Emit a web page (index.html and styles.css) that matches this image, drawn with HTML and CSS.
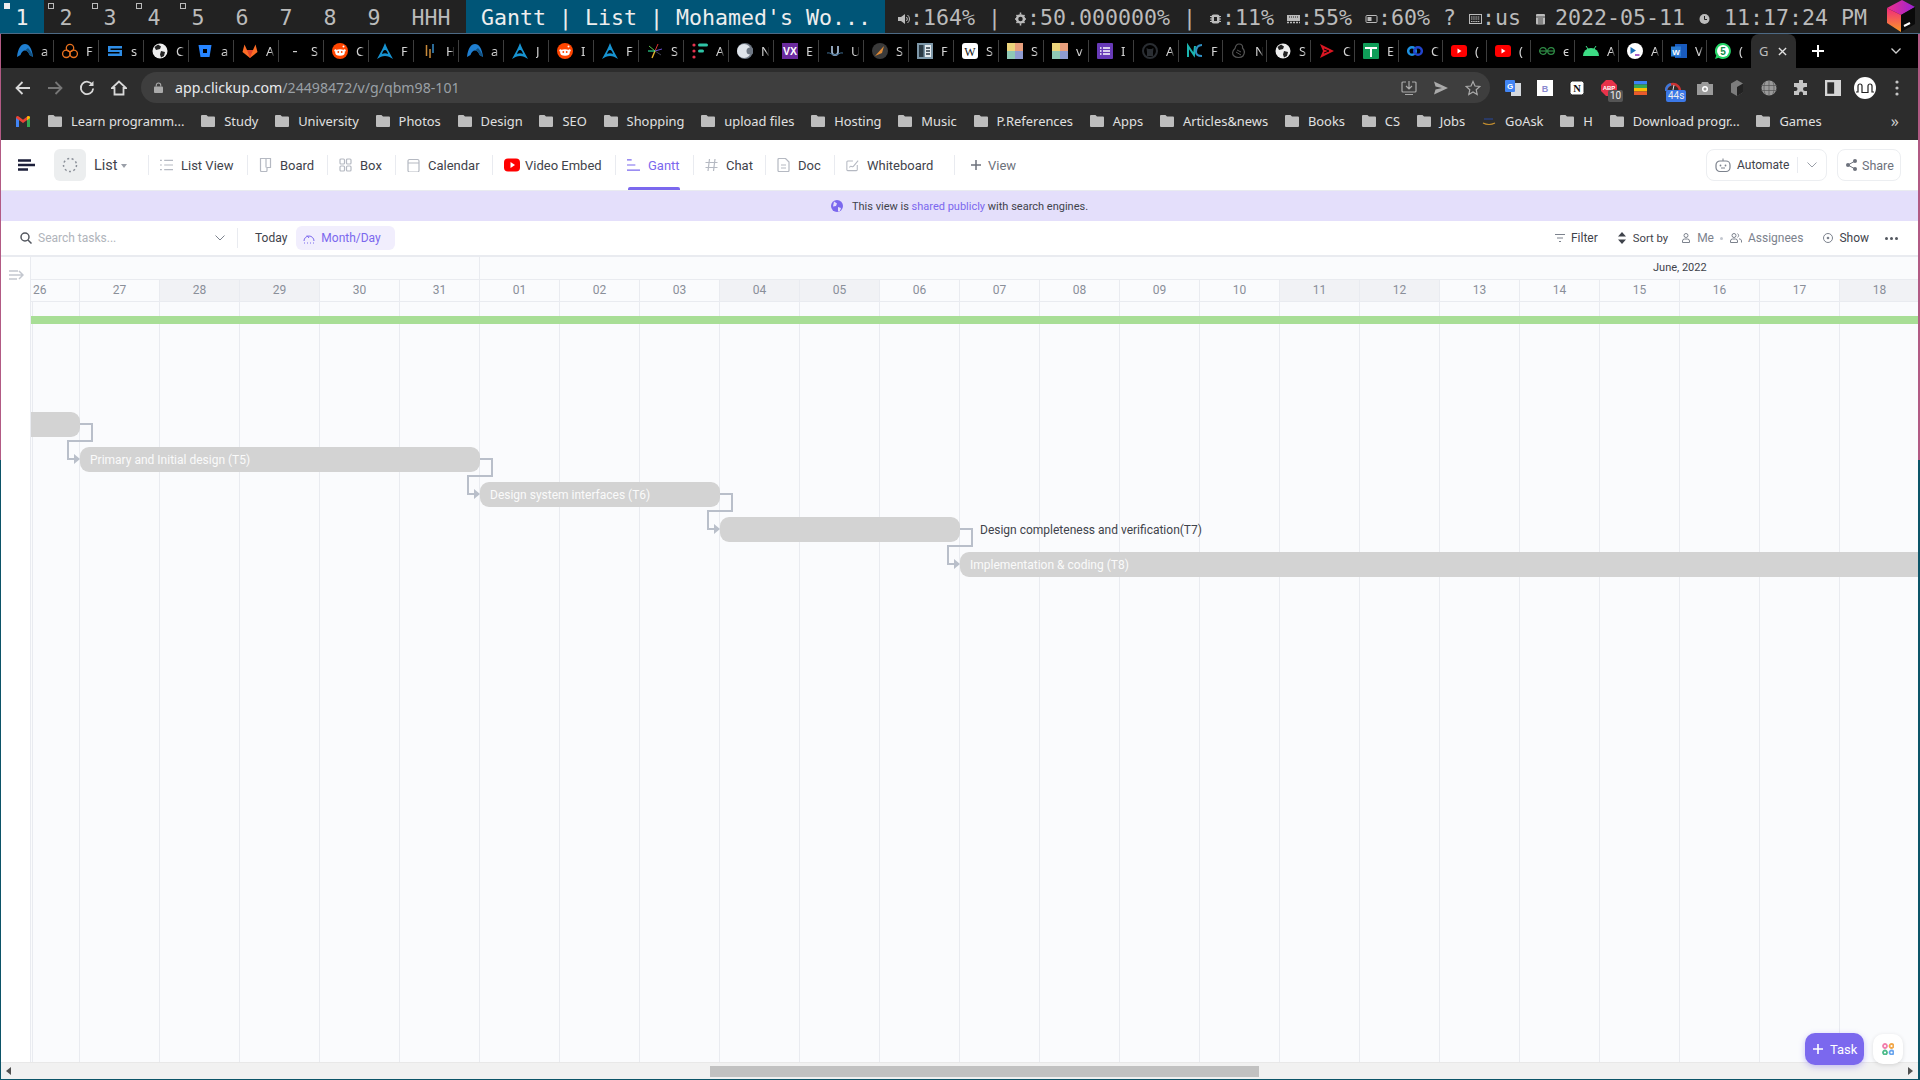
FILE: index.html
```html
<!DOCTYPE html>
<html lang="en">
<head>
    <meta charset="UTF-8">
    <meta name="viewport" content="width=device-width, initial-scale=1.0">
    <title>Gantt | List | Mohamed's Workspace</title>
    <link rel="stylesheet" href="styles.css">
</head>
<body>
    <!-- Icon sprite -->
    <svg class="sprite" xmlns="http://www.w3.org/2000/svg">
        <symbol id="g-vol" viewBox="0 0 13 16"><path d="M1 6h3l4-3v10l-4-3H1z" fill="currentColor"/><path d="M9.500 6a3 3 0 0 1 0 4M10.500 4a5 5 0 0 1 0 8" stroke="currentColor" fill="none"/></symbol>
        <symbol id="g-gear" viewBox="0 0 13 16"><circle cx="6.500" cy="8" r="3.500" fill="none" stroke="currentColor" stroke-width="2.500"/><path d="M6.500 1.500v2M6.500 12.500v2M1 8h2M10 8h2M2.500 4l1.500 1.500M9 10.500l1.500 1.500M2.500 12L4 10.500M9 5.500L10.500 4" stroke="currentColor" stroke-width="1.500"/></symbol>
        <symbol id="g-cpu" viewBox="0 0 13 16"><rect x="2.500" y="3.500" width="8" height="9" rx="2" fill="currentColor"/><path d="M1 5.500h11M1 8h11M1 10.500h11" stroke="currentColor"/><rect x="5" y="6" width="3" height="4" fill="#222"/></symbol>
        <symbol id="g-ram" viewBox="0 0 13 16"><rect x="0" y="4" width="13" height="6" fill="currentColor"/><path d="M0 11.500h13" stroke="currentColor" stroke-width="1.500" stroke-dasharray="2 1"/><path d="M2 6h9" stroke="#222" stroke-dasharray="1 1"/></symbol>
        <symbol id="g-batt" viewBox="0 0 13 16"><rect x="1" y="4.500" width="11" height="7" rx="1" fill="none" stroke="currentColor"/><rect x="2.500" y="6" width="4" height="4" fill="currentColor"/></symbol>
        <symbol id="g-kbd" viewBox="0 0 13 16"><rect x="0.500" y="3.500" width="12" height="9" fill="none" stroke="currentColor"/><path d="M2 6h9M2 8h9M2 10.500h9" stroke="currentColor" stroke-width="1.200" stroke-dasharray="1.500 .7"/></symbol>
        <symbol id="g-cal" viewBox="0 0 13 16"><rect x="2" y="3" width="9" height="10.500" rx="1" fill="currentColor"/><path d="M2 6h9M4 8h5M4 10h5M4 12h5" stroke="#222" stroke-width=".7"/></symbol>
        <symbol id="g-clock" viewBox="0 0 13 16"><circle cx="6.500" cy="8" r="5" fill="currentColor"/><path d="M6.500 5v3.500h2.500" stroke="#222" fill="none"/></symbol>

        <symbol id="f-arc" viewBox="0 0 16 16"><path d="M0 14C1 5 4 1 8 1s7 4 8 13l-3.500-2C11.500 9 10 7.500 8 7.500S4.500 9 3.500 12z" fill="#1f7fd1"/><path d="M8 7.500c2 0 3.500 1.500 4.500 4.500l3.500 2C15 10 13 7 11 5z" fill="#12507f"/></symbol>
        <symbol id="f-cloud" viewBox="0 0 16 16"><g fill="none" stroke="#e8711f" stroke-width="1.300"><circle cx="8" cy="5" r="3.700"/><circle cx="4.300" cy="10.800" r="3.700"/><circle cx="11.700" cy="10.800" r="3.700"/></g></symbol>
        <symbol id="f-sblue" viewBox="0 0 16 16"><path d="M1 3h14v2.500H3.500V7H15v6H1v-2.500h11.500V9H1z" fill="#2e8de6"/></symbol>
        <symbol id="f-globe" viewBox="0 0 16 16"><circle cx="8" cy="8" r="7.500" fill="#eee"/><path d="M6 1.500l3 2-1 2.500-4 1-1.500-3zM9 8l4 1-1 4-3 1.500-1-3z" fill="#222"/></symbol>
        <symbol id="f-bit" viewBox="0 0 16 16"><path d="M1.500 2h13l-2 12h-9z" fill="#2684ff"/><rect x="6" y="6" width="4" height="4" fill="#000"/></symbol>
        <symbol id="f-gitlab" viewBox="0 0 16 16"><path d="M8 15L.500 9 2.500 1.500 5 7h6l2.500-5.500L15.500 9z" fill="#fc6d26"/><path d="M8 15L5 7h6z" fill="#e24329"/></symbol>
        <symbol id="f-dash" viewBox="0 0 16 16"><rect x="6" y="8" width="4" height="1.200" fill="#ccc"/></symbol>
        <symbol id="f-reddit" viewBox="0 0 16 16"><circle cx="8" cy="8" r="8" fill="#ff4500"/><ellipse cx="8" cy="9.500" rx="4.800" ry="3.200" fill="#fff"/><circle cx="3.500" cy="7.500" r="1.200" fill="#fff"/><circle cx="12.500" cy="7.500" r="1.200" fill="#fff"/><circle cx="11.500" cy="3.500" r="1" fill="#fff"/><circle cx="6.300" cy="9" r=".9" fill="#ff4500"/><circle cx="9.700" cy="9" r=".9" fill="#ff4500"/></symbol>
        <symbol id="f-arch" viewBox="0 0 16 16"><path d="M8 0C6.500 4 4 9 0 16c3-2 5-3 8-3s5 1 8 3C12 9 9.500 4 8 0z" fill="#1793d1"/><path d="M8 7c-1.500 0-2.500 2-3 4 2-1 4-1 6 0-.5-2-1.500-4-3-4z" fill="#000"/></symbol>
        <symbol id="f-hh" viewBox="0 0 16 16"><path d="M4.500 2v11M8 6v9" stroke="#c98a3a" stroke-width="1.500"/><path d="M11 1v9" stroke="#3a8ec9" stroke-width="1.500"/></symbol>
        <symbol id="f-spark" viewBox="0 0 16 16"><path d="M8 8L2 3" stroke="#58c34c"/><path d="M8 8l3-7" stroke="#d33"/><path d="M8 8l7-2" stroke="#6a4fd0"/><path d="M8 8l6 4" stroke="#445"/><path d="M8 8l-3 7" stroke="#e2b12f" stroke-width="1.400"/><path d="M8 8H1" stroke="#3fa"/></symbol>
        <symbol id="f-flags" viewBox="0 0 16 16"><circle cx="2" cy="2" r="1.600" fill="#e5344f"/><circle cx="2" cy="8" r="1.600" fill="#e5344f"/><circle cx="2" cy="14" r="1.600" fill="#e5344f"/><rect x="6" y="0.500" width="10" height="3" rx="1.500" fill="#2ec4a6"/><rect x="6" y="6.500" width="6" height="3" rx="1.500" fill="#2ec4a6"/></symbol>
        <symbol id="f-moon" viewBox="0 0 16 16"><circle cx="8" cy="8" r="8" fill="#6f7884"/><circle cx="7" cy="8" r="7" fill="#dfe4ea"/><circle cx="13" cy="8" r="3.500" fill="#6f7884"/></symbol>
        <symbol id="f-vx" viewBox="0 0 16 16"><rect width="16" height="16" fill="#6b2b9e"/><text x="8" y="12" font-size="10.500" font-weight="700" font-family="Liberation Sans" text-anchor="middle" fill="#fff">VX</text></symbol>
        <symbol id="f-u" viewBox="0 0 16 16"><path d="M5 3v6a3 3 0 0 0 6 0V3" fill="none" stroke="#9fb4cc" stroke-width="1.800"/><path d="M0 10c3-1 5 2 8 2s5-3 8-2" fill="none" stroke="#3f6d92"/></symbol>
        <symbol id="f-meteor" viewBox="0 0 16 16"><circle cx="8" cy="8" r="8" fill="#3a3a3a"/><path d="M3 13L12 3l-2 7z" fill="#e08a35"/></symbol>
        <symbol id="f-panel" viewBox="0 0 16 16"><rect width="16" height="16" fill="#7d97a8"/><rect x="2" y="2" width="4.500" height="12" fill="#2b3a44"/><rect x="8" y="2" width="6" height="12" fill="#e8eef2"/><path d="M9 5h4M9 8h4M9 11h4" stroke="#2b3a44" stroke-width="1.500"/></symbol>
        <symbol id="f-wiki" viewBox="0 0 16 16"><rect width="16" height="16" rx="3" fill="#fff"/><text x="8" y="12.500" font-size="12" font-family="Liberation Serif" text-anchor="middle" fill="#111">W</text></symbol>
        <symbol id="f-quad" viewBox="0 0 16 16"><clipPath id="qc"><rect width="16" height="16" rx="3"/></clipPath><g clip-path="url(#qc)"><rect width="8" height="8" fill="#ecd47c"/><rect x="8" width="8" height="8" fill="#e89f7d"/><rect y="8" width="8" height="8" fill="#8fc9b5"/><rect x="8" y="8" width="8" height="8" fill="#8f9bd1"/></g></symbol>
        <symbol id="f-form" viewBox="0 0 16 16"><rect width="16" height="16" rx="1" fill="#673ab7"/><path d="M6 5h7M6 8h7M6 11h7M3 5h1.500M3 8h1.500M3 11h1.500" stroke="#fff" stroke-width="1.500"/></symbol>
        <symbol id="f-github" viewBox="0 0 16 16"><circle cx="8" cy="8" r="7" fill="none" stroke="#2a2e33" stroke-width="2"/><path d="M5 13V9L4.500 5l2 1h3l2-1L11 9v4z" fill="#2a2e33"/></symbol>
        <symbol id="f-teal" viewBox="0 0 16 16"><path d="M1 14V3l6 9 1-9" fill="none" stroke="#1bb5b0" stroke-width="2"/><path d="M15 2C10 2 9 6 9 9s2 4 6 4" fill="none" stroke="#2f8fc4" stroke-width="2"/></symbol>
        <symbol id="f-bird" viewBox="0 0 16 16"><path d="M8 1c3 0 4 2 3.500 4 2 2 2.500 5 .5 8-2 2-7 2-9 0S1 8 4 5.500C4.500 3 6 1 8 1z" fill="none" stroke="#555" stroke-width="1.200"/><path d="M5 9l5 3M6 7l4 2" stroke="#555"/></symbol>
        <symbol id="f-play" viewBox="0 0 16 16"><path d="M1 1l14 7-14 7 3-7z" fill="#d91622"/><path d="M5 6l5 2-5 2" fill="none" stroke="#000"/></symbol>
        <symbol id="f-plus" viewBox="0 0 16 16"><rect width="16" height="16" rx="1" fill="#0f9d58"/><path d="M2 5h12M8 5v9" stroke="#fff" stroke-width="2"/></symbol>
        <symbol id="f-webex" viewBox="0 0 16 16"><circle cx="5" cy="8" r="3.800" fill="none" stroke="#1e90e0" stroke-width="2.500"/><circle cx="11" cy="8" r="3.800" fill="none" stroke="#2244cc" stroke-width="2.500"/></symbol>
        <symbol id="f-yt" viewBox="0 0 16 16"><rect y="2" width="16" height="12" rx="3" fill="#f00"/><path d="M6.500 5.500l4 2.500-4 2.500z" fill="#fff"/></symbol>
        <symbol id="f-gfg" viewBox="0 0 16 16"><g fill="none" stroke="#2f8d46" stroke-width="1.200"><circle cx="4" cy="8" r="3.300"/><circle cx="12" cy="8" r="3.300"/><path d="M0 8h16"/></g></symbol>
        <symbol id="f-android" viewBox="0 0 16 16"><path d="M0 13a8 8 0 0 1 16 0z" fill="#3ddc84"/><path d="M3 3l2 3M13 3l-2 3" stroke="#3ddc84"/></symbol>
        <symbol id="f-ps" viewBox="0 0 16 16"><circle cx="8" cy="8" r="8" fill="#fff"/><path d="M3.500 4L9 7.500 3.500 11z" fill="#1a6fb8"/><path d="M8 12h4.500" stroke="#8b2fb8" stroke-width="1.500"/></symbol>
        <symbol id="f-word" viewBox="0 0 16 16"><rect x="4" y="1" width="12" height="14" fill="#185abd"/><rect x="0" y="3.500" width="10" height="10" fill="#2b7cd3"/><text x="5" y="11.500" font-size="8" font-weight="700" font-family="Liberation Sans" text-anchor="middle" fill="#fff">W</text></symbol>
        <symbol id="f-wa" viewBox="0 0 16 16"><path d="M8 0a8 8 0 1 1-4.500 14.700L0 16l1.300-3.500A8 8 0 0 1 8 0z" fill="#25d366"/><circle cx="8" cy="8" r="6" fill="#fff"/><text x="8" y="11.500" font-size="10" font-weight="700" font-family="Liberation Sans" text-anchor="middle" fill="#128c4a">5</text></symbol>

        <symbol id="i-folder" viewBox="0 0 14 12"><path d="M1 0h4.500L7 1.500h6a1 1 0 0 1 1 1V11a1 1 0 0 1-1 1H1a1 1 0 0 1-1-1V1a1 1 0 0 1 1-1z" fill="#bdbdbd"/></symbol>
    </svg>

    <!-- dwm bar -->
    <div class="statusbar">
        <div class="tag tag-active"><i class="mark mark-on"></i>1</div>
        <div class="tag"><i class="mark"></i>2</div>
        <div class="tag"><i class="mark"></i>3</div>
        <div class="tag"><i class="mark"></i>4</div>
        <div class="tag"><i class="mark"></i>5</div>
        <div class="tag">6</div>
        <div class="tag">7</div>
        <div class="tag">8</div>
        <div class="tag">9</div>
        <div class="layout">HHH</div>
        <div class="wintitle">Gantt | List | Mohamed's Wo...</div>
        <div class="status"><svg class="gl"><use href="#g-vol"/></svg>:164% | <svg class="gl"><use href="#g-gear"/></svg>:50.000000% | <svg class="gl"><use href="#g-cpu"/></svg>:11% <svg class="gl"><use href="#g-ram"/></svg>:55% <svg class="gl"><use href="#g-batt"/></svg>:60% ? <svg class="gl"><use href="#g-kbd"/></svg>:us <svg class="gl gl-cal"><use href="#g-cal"/></svg> 2022-05-11 <svg class="gl"><use href="#g-clock"/></svg> 11:17:24 PM</div>
        <svg class="barlogo" viewBox="0 0 31 33">
            <defs>
                <linearGradient id="logo-top" x1="0" y1="0" x2="1" y2="0"><stop offset="0" stop-color="#f0308a"/><stop offset="1" stop-color="#9a22d6"/></linearGradient>
                <linearGradient id="logo-left" x1="0" y1="0" x2="0" y2="1"><stop offset="0" stop-color="#f0287e"/><stop offset="1" stop-color="#fb9a24"/></linearGradient>
            </defs>
            <path d="M16 0L29 7 15 15 1 8z" fill="url(#logo-top)"/>
            <path d="M1 8l14 7v17L1 23z" fill="url(#logo-left)"/>
            <path d="M15 15l14-8v17l-14 8z" fill="#0a0a0a"/>
            <path d="M18 26l6-3" stroke="#fff" stroke-width="2"/>
        </svg>
    </div>

    <div class="window">
        <!-- Tab strip -->
        <div class="tabstrip">
            <div class="ctab"><svg class="fav"><use href="#f-arc"/></svg><span>a</span></div>
            <div class="ctab"><svg class="fav"><use href="#f-cloud"/></svg><span>F</span></div>
            <div class="ctab"><svg class="fav"><use href="#f-sblue"/></svg><span>s</span></div>
            <div class="ctab"><svg class="fav"><use href="#f-globe"/></svg><span>C</span></div>
            <div class="ctab"><svg class="fav"><use href="#f-bit"/></svg><span>a</span></div>
            <div class="ctab"><svg class="fav"><use href="#f-gitlab"/></svg><span>A</span></div>
            <div class="ctab"><svg class="fav"><use href="#f-dash"/></svg><span>S</span></div>
            <div class="ctab"><svg class="fav"><use href="#f-reddit"/></svg><span>C</span></div>
            <div class="ctab"><svg class="fav"><use href="#f-arch"/></svg><span>F</span></div>
            <div class="ctab"><svg class="fav"><use href="#f-hh"/></svg><span>H</span></div>
            <div class="ctab"><svg class="fav"><use href="#f-arc"/></svg><span>a</span></div>
            <div class="ctab"><svg class="fav"><use href="#f-arch"/></svg><span>J</span></div>
            <div class="ctab"><svg class="fav"><use href="#f-reddit"/></svg><span>I</span></div>
            <div class="ctab"><svg class="fav"><use href="#f-arch"/></svg><span>F</span></div>
            <div class="ctab"><svg class="fav"><use href="#f-spark"/></svg><span>S</span></div>
            <div class="ctab"><svg class="fav"><use href="#f-flags"/></svg><span>A</span></div>
            <div class="ctab"><svg class="fav"><use href="#f-moon"/></svg><span>N</span></div>
            <div class="ctab"><svg class="fav"><use href="#f-vx"/></svg><span>E</span></div>
            <div class="ctab"><svg class="fav"><use href="#f-u"/></svg><span>U</span></div>
            <div class="ctab"><svg class="fav"><use href="#f-meteor"/></svg><span>S</span></div>
            <div class="ctab"><svg class="fav"><use href="#f-panel"/></svg><span>F</span></div>
            <div class="ctab"><svg class="fav"><use href="#f-wiki"/></svg><span>S</span></div>
            <div class="ctab"><svg class="fav"><use href="#f-quad"/></svg><span>S</span></div>
            <div class="ctab"><svg class="fav"><use href="#f-quad"/></svg><span>v</span></div>
            <div class="ctab"><svg class="fav"><use href="#f-form"/></svg><span>I</span></div>
            <div class="ctab"><svg class="fav"><use href="#f-github"/></svg><span>A</span></div>
            <div class="ctab ctab-sm"><svg class="fav"><use href="#f-teal"/></svg><span>F</span></div>
            <div class="ctab ctab-sm"><svg class="fav"><use href="#f-bird"/></svg><span>N</span></div>
            <div class="ctab ctab-sm"><svg class="fav"><use href="#f-globe"/></svg><span>S</span></div>
            <div class="ctab ctab-sm"><svg class="fav"><use href="#f-play"/></svg><span>C</span></div>
            <div class="ctab ctab-sm"><svg class="fav"><use href="#f-plus"/></svg><span>E</span></div>
            <div class="ctab ctab-sm"><svg class="fav"><use href="#f-webex"/></svg><span>C</span></div>
            <div class="ctab ctab-sm"><svg class="fav"><use href="#f-yt"/></svg><span>(</span></div>
            <div class="ctab ctab-sm"><svg class="fav"><use href="#f-yt"/></svg><span>(</span></div>
            <div class="ctab ctab-sm"><svg class="fav"><use href="#f-gfg"/></svg><span>є</span></div>
            <div class="ctab ctab-sm"><svg class="fav"><use href="#f-android"/></svg><span>A</span></div>
            <div class="ctab ctab-sm"><svg class="fav"><use href="#f-ps"/></svg><span>A</span></div>
            <div class="ctab ctab-sm"><svg class="fav"><use href="#f-word"/></svg><span>V</span></div>
            <div class="ctab ctab-sm ctab-last"><svg class="fav"><use href="#f-wa"/></svg><span>(</span></div>
            <div class="ctab-active"><span>G</span><svg class="ctab-close" viewBox="0 0 10 10"><path d="M1 1l8 8M9 1l-8 8"/></svg></div>
            <svg class="newtab" viewBox="0 0 12 12"><path d="M6 0v12M0 6h12"/></svg>
            <svg class="tabmenu" viewBox="0 0 10 6"><path d="M.500 .500L5 5 9.500 .500"/></svg>
        </div>

        <!-- Address bar -->
        <div class="toolbar">
            <div class="tbtn"><svg viewBox="0 0 16 16"><path class="st" d="M15 8H2M7.500 2L1.500 8l6 6"/></svg></div>
            <div class="tbtn tbtn-off"><svg viewBox="0 0 16 16"><path class="st" d="M1 8h13M8.500 2l6 6-6 6"/></svg></div>
            <div class="tbtn"><svg viewBox="0 0 16 16"><path class="st" d="M13.500 5A6.200 6.200 0 1 0 14.200 8.500"/><path d="M14.500 1v5h-5z" fill="currentColor"/></svg></div>
            <div class="tbtn"><svg viewBox="0 0 16 16"><path class="st" d="M8 1.500L1 8h2.500v6.500h9V8H15z"/></svg></div>
            <div class="omnibox">
                <svg class="lock" viewBox="0 0 10 12"><path d="M2.500 5V3.500a2.500 2.500 0 0 1 5 0V5" fill="none" stroke="currentColor" stroke-width="1.200"/><rect y="5" width="10" height="7" rx="1" fill="currentColor"/></svg>
                <div class="url"><span class="host">app.clickup.com</span>/24498472/v/g/qbm98-101</div>
                <div class="tbtn"><svg viewBox="0 0 16 16"><path class="st thin" d="M5 2H2a1 1 0 0 0-1 1v8a1 1 0 0 0 1 1h12a1 1 0 0 0 1-1V3a1 1 0 0 0-1-1h-3M8 1v7M5 6l3 3 3-3M4 14.500h8"/></svg></div>
                <div class="tbtn"><svg viewBox="0 0 16 16"><path d="M1 1.500L15 8 1 14.500l1.500-5L9 8l-6.500-1.500z" fill="currentColor"/></svg></div>
                <div class="tbtn"><svg viewBox="0 0 16 16"><path class="st thin" d="M8 1.500l2 4.500 4.800.5-3.600 3.200 1 4.800L8 12l-4.200 2.500 1-4.800L1.200 6.500 6 6z"/></svg></div>
            </div>
            <div class="tbtn"><svg viewBox="0 0 16 16"><rect x="6" y="3" width="10" height="13" fill="#d5d9de"/><rect width="10" height="12" rx="1" fill="#4285f4"/><text x="5" y="9" font-size="8" font-weight="700" font-family="Liberation Sans" text-anchor="middle" fill="#fff">G</text></svg></div>
            <div class="tbtn"><svg viewBox="0 0 16 16"><rect width="16" height="16" fill="#fff"/><text x="8" y="11.500" font-size="9" font-weight="700" font-family="Liberation Sans" text-anchor="middle" fill="#8a8ad0">B</text></svg></div>
            <div class="tbtn"><svg viewBox="0 0 16 16"><rect x="1" y="1" width="14" height="14" rx="2.500" fill="#fff" stroke="#222"/><text x="8" y="12" font-size="10.500" font-weight="700" font-family="Liberation Serif" text-anchor="middle" fill="#111">N</text></svg></div>
            <div class="tbtn"><svg viewBox="0 0 16 16"><path d="M5 0h6l5 5v6l-5 5H5l-5-5V5z" fill="#e8334a"/><text x="8" y="10" font-size="6" font-weight="700" font-family="Liberation Sans" text-anchor="middle" fill="#fff">ABP</text></svg><span class="xbadge xbadge-grey">10</span></div>
            <div class="tbtn"><svg viewBox="0 0 16 16"><rect x="1" y="1" width="13" height="3.500" fill="#3b82f6"/><rect x="1" y="4.500" width="13" height="3.500" fill="#34a853"/><rect x="1" y="8" width="13" height="3.500" fill="#fbbc05"/><rect x="1" y="11.500" width="13" height="3.500" fill="#ea5a2c"/></svg></div>
            <div class="tbtn"><svg viewBox="0 0 16 16"><path d="M1 11a7 7 0 0 1 14 0" fill="none" stroke="#c33" stroke-width="2.500"/><path d="M1 11a7 7 0 0 1 5-6.700" fill="none" stroke="#3b78d8" stroke-width="2.500"/><path d="M8 10l1-5" stroke="#ddd"/></svg><span class="xbadge xbadge-blue">44s</span></div>
            <div class="tbtn"><svg viewBox="0 0 16 16"><path d="M0 4h4l1-2h6l1 2h4v11H0z" fill="#9a9a9a"/><circle cx="8" cy="9" r="3" fill="#fff"/><circle cx="8" cy="9" r="1.500" fill="#9a9a9a"/></svg></div>
            <div class="tbtn"><svg viewBox="0 0 16 16"><path d="M8 0l6 3.500v9L8 16l-6-3.500v-9z" fill="#7c7c7c"/><path d="M8 7l6-3.500v9L8 16z" fill="#222"/></svg></div>
            <div class="tbtn"><svg viewBox="0 0 16 16"><circle cx="8" cy="8" r="7.500" fill="#9a9a9a"/><path d="M0 5.500h16M0 10.500h16M8 0v16M4.500 1c-2 4-2 10 0 14M11.500 1c2 4 2 10 0 14" stroke="#555" stroke-width=".7" fill="none"/></svg></div>
            <div class="tbtn"><svg viewBox="0 0 16 16"><path d="M6 1a2 2 0 0 1 4 0v2h4v4h-2a2 2 0 0 0 0 4h2v4h-4v-1.500a2 2 0 0 0-4 0V15H1v-4h1.500a2 2 0 0 0 0-4H1V3h5z" fill="#c4c4c4"/></svg></div>
            <div class="tbtn"><svg viewBox="0 0 14 14"><rect x="1" y="1" width="12" height="12" fill="none" stroke="#d5d5d5" stroke-width="2"/><rect x="8" y="1" width="5" height="12" fill="#d5d5d5"/></svg></div>
            <div class="tbtn avatar-btn"><svg viewBox="0 0 22 22"><circle cx="11" cy="11" r="11" fill="#fff"/><path d="M2 15h2V9a2 2 0 0 1 4 0v6.500h6V9a2 2 0 0 1 4 0v6h2" fill="none" stroke="#222" stroke-width="1.200"/></svg></div>
            <div class="tbtn"><svg viewBox="0 0 4 16"><circle cx="2" cy="2" r="1.600" fill="#c4c4c4"/><circle cx="2" cy="8" r="1.600" fill="#c4c4c4"/><circle cx="2" cy="14" r="1.600" fill="#c4c4c4"/></svg></div>
        </div>

        <!-- Bookmarks -->
        <div class="bookmarks">
            <svg class="gmail" viewBox="0 0 14 12"><rect y="3" width="3" height="9" fill="#4285f4"/><rect x="11" y="3" width="3" height="9" fill="#34a853"/><path d="M0 2.500A1.500 1.500 0 0 1 2.400 1.300L7 4.800l4.600-3.500A1.500 1.500 0 0 1 14 2.500V3L7 8 0 3z" fill="#ea4335"/><path d="M11 1.700l.6-.4A1.500 1.500 0 0 1 14 2.500V3l-3 2.200z" fill="#fbbc05"/></svg>
            <div class="bm"><svg class="folder"><use href="#i-folder"/></svg>Learn programm...</div>
            <div class="bm"><svg class="folder"><use href="#i-folder"/></svg>Study</div>
            <div class="bm"><svg class="folder"><use href="#i-folder"/></svg>University</div>
            <div class="bm"><svg class="folder"><use href="#i-folder"/></svg>Photos</div>
            <div class="bm"><svg class="folder"><use href="#i-folder"/></svg>Design</div>
            <div class="bm"><svg class="folder"><use href="#i-folder"/></svg>SEO</div>
            <div class="bm"><svg class="folder"><use href="#i-folder"/></svg>Shopping</div>
            <div class="bm"><svg class="folder"><use href="#i-folder"/></svg>upload files</div>
            <div class="bm"><svg class="folder"><use href="#i-folder"/></svg>Hosting</div>
            <div class="bm"><svg class="folder"><use href="#i-folder"/></svg>Music</div>
            <div class="bm"><svg class="folder"><use href="#i-folder"/></svg>P.References</div>
            <div class="bm"><svg class="folder"><use href="#i-folder"/></svg>Apps</div>
            <div class="bm"><svg class="folder"><use href="#i-folder"/></svg>Articles&amp;news</div>
            <div class="bm"><svg class="folder"><use href="#i-folder"/></svg>Books</div>
            <div class="bm"><svg class="folder"><use href="#i-folder"/></svg>CS</div>
            <div class="bm"><svg class="folder"><use href="#i-folder"/></svg>Jobs</div>
            <div class="bm"><svg class="folder"><path d="M1 8c4 2 8 2 12 0" fill="none" stroke="#c8912f" stroke-width="1.200"/><path d="M2 4h9" stroke="#2a3a66" stroke-width="2"/></svg>GoAsk</div>
            <div class="bm"><svg class="folder"><use href="#i-folder"/></svg>H</div>
            <div class="bm"><svg class="folder"><use href="#i-folder"/></svg>Download progr...</div>
            <div class="bm"><svg class="folder"><use href="#i-folder"/></svg>Games</div>
            <div class="bm-more">»</div>
        </div>

        <!-- ClickUp page -->
        <div class="page">
            <div class="view-header">
                <svg class="burger" viewBox="0 0 17 12"><path d="M0 1.500h13M0 6h17M0 10.500h10" stroke="#1c1f3a" stroke-width="2.400"/></svg>
                <div class="space-btn"><svg viewBox="0 0 16 16"><circle cx="8" cy="8" r="6.500" fill="none" stroke="#8a8f98" stroke-width="1.500" stroke-dasharray="2 2.500"/></svg></div>
                <div class="list-name">List<i class="caret"></i></div>
                <div class="view-tabs">
                    <div class="view-tab vt-list"><svg viewBox="0 0 14 14"><path class="ic" d="M0 2h2M0 7h2M0 12h2M4.500 2H14M4.500 7H14M4.500 12H14"/></svg>List View</div>
                    <div class="view-tab vt-board"><svg viewBox="0 0 12 14"><path class="ic" d="M1 .500h10v9H7.500v3a1 1 0 0 1-1 1H2a1 1 0 0 1-1-1zM6.500 .500v9"/></svg>Board</div>
                    <div class="view-tab vt-box"><svg viewBox="0 0 12 14"><g class="ic"><rect x=".5" y="1" width="4.500" height="5" rx="1"/><rect x="7" y="1" width="4.500" height="5" rx="1"/><rect x=".5" y="8" width="4.500" height="5" rx="1"/><rect x="7" y="8" width="4.500" height="5" rx="1"/></g></svg>Box</div>
                    <div class="view-tab vt-cal"><svg viewBox="0 0 12 14"><path class="ic" d="M2 1.500h8a1.500 1.500 0 0 1 1.500 1.500v9.500A1.500 1.500 0 0 1 10 14H2A1.500 1.500 0 0 1 .5 12.500V3A1.500 1.500 0 0 1 2 1.500zM.5 5h11"/></svg>Calendar</div>
                    <div class="view-tab vt-video"><svg class="yt" viewBox="0 0 16 16"><rect y="1.500" width="16" height="13" rx="4" fill="#f00"/><path d="M6.500 5l4.500 3-4.500 3z" fill="#fff"/></svg>Video Embed</div>
                    <div class="view-tab view-tab-on vt-gantt"><svg viewBox="0 0 14 14"><path class="ic" d="M0 1.500h5M0 7h9M0 12.500h14"/></svg>Gantt</div>
                    <div class="view-tab vt-chat"><svg viewBox="0 0 13 14"><path class="ic" d="M4.500 1L3 13M10 1L8.500 13M.5 4.500h12M.5 9.500h12"/></svg>Chat</div>
                    <div class="view-tab vt-doc"><svg viewBox="0 0 12 14"><path class="ic" d="M1.500 .5H8l3.500 3.500v8.500a1 1 0 0 1-1 1h-9a1 1 0 0 1-1-1v-11a1 1 0 0 1 1-1zM3.500 7h5M3.500 10h5"/></svg>Doc</div>
                    <div class="view-tab vt-white"><svg viewBox="0 0 15 14"><path class="ic" d="M13 7v5.500a1 1 0 0 1-1 1H2a1 1 0 0 1-1-1v-9a1 1 0 0 1 1-1h6M4 10c2-4 3 1 5-2l5-6"/></svg>Whiteboard</div>
                    <div class="view-add"><svg viewBox="0 0 10 10"><path d="M5 0v10M0 5h10" stroke="#6d727c" stroke-width="1.500"/></svg>View</div>
                </div>
                <div class="head-right">
                    <div class="automate">
                        <svg viewBox="0 0 16 16"><rect x="1" y="4" width="14" height="10.500" rx="4" fill="none" stroke="#7c828d" stroke-width="1.200"/><path d="M8 4V1.500" stroke="#7c828d"/><circle cx="5.500" cy="8.500" r=".9" fill="#7c828d"/><circle cx="10.500" cy="8.500" r=".9" fill="#7c828d"/><path d="M6 11h4" stroke="#7c828d"/></svg>
                        <span>Automate</span>
                        <i class="auto-sep"></i>
                        <svg class="auto-chev" viewBox="0 0 10 6"><path d="M.5 .5L5 5 9.500 .5" fill="none" stroke="#9a9fa8"/></svg>
                    </div>
                    <div class="share-btn">
                        <svg viewBox="0 0 11 12"><circle cx="9" cy="2" r="2" fill="#6d727c"/><circle cx="9" cy="10" r="2" fill="#6d727c"/><circle cx="2" cy="6" r="2" fill="#6d727c"/><path d="M9 2L2 6l7 4" fill="none" stroke="#6d727c"/></svg>
                        Share
                    </div>
                </div>
            </div>

            <div class="banner">
                <svg viewBox="0 0 12 12"><circle cx="6" cy="6" r="6" fill="#7b68ee"/><path d="M3 1.500l3 2-1 2.500-3 .5M7 7l3 1-1 3-2 .5z" fill="#e4dffb"/></svg>
                <span>This view is <a href="#">shared publicly</a> with search engines.</span>
            </div>

            <div class="gantt-bar">
                <div class="search">
                    <svg viewBox="0 0 12 12"><circle cx="5" cy="5" r="4" fill="none" stroke="#53575f" stroke-width="1.500"/><path d="M8 8l3.500 3.500" stroke="#53575f" stroke-width="1.500"/></svg>
                    <span>Search tasks...</span>
                    <svg class="search-chev" viewBox="0 0 10 6"><path d="M.5 .5L5 5 9.500 .5" fill="none" stroke="#7c828d"/></svg>
                </div>
                <div class="today">Today</div>
                <div class="scale-pill">
                    <svg viewBox="0 0 12 12"><path d="M1 9a5 5 0 0 1 10 0" fill="none" stroke="#7b68ee"/><path d="M6 6L4 3.500M1 11h1M4 11h1M7 11h1M10 11h1" stroke="#7b68ee"/></svg>
                    Month/Day
                </div>
                <div class="tools">
                    <div class="tool tool-filter"><svg viewBox="0 0 10 8"><path d="M0 .5h10M2 4h6M4 7.500h2" stroke="#7c828d"/></svg>Filter</div>
                    <div class="tool tool-sort"><svg viewBox="0 0 8 12"><path d="M4 0l4 4.500H0zM4 12L0 7.500h8z" fill="#3f434b"/></svg>Sort by</div>
                    <div class="tool tool-dim tool-me"><svg viewBox="0 0 8 10"><circle cx="4" cy="2.500" r="2" fill="none" stroke="#7c828d"/><path d="M.5 9.500V8a2 2 0 0 1 2-2h3a2 2 0 0 1 2 2v1.500z" fill="none" stroke="#7c828d"/></svg>Me</div>
                    <i class="tool-dot"></i>
                    <div class="tool tool-dim tool-assign"><svg viewBox="0 0 12 10"><circle cx="4" cy="2.500" r="2" fill="none" stroke="#7c828d"/><path d="M.5 9.500V8a2 2 0 0 1 2-2h3a2 2 0 0 1 2 2v1.500zM7.500 .7a2 2 0 0 1 0 3.600M9 6a2 2 0 0 1 2.500 2v1.500" fill="none" stroke="#7c828d"/></svg>Assignees</div>
                    <div class="tool tool-show"><svg viewBox="0 0 10 10"><circle cx="5" cy="5" r="4.500" fill="none" stroke="#7c828d"/><circle cx="5" cy="5" r="1.300" fill="#7c828d"/></svg>Show</div>
                    <svg class="tool-more" viewBox="0 0 13 3"><circle cx="1.500" cy="1.500" r="1.500" fill="#53575f"/><circle cx="6.500" cy="1.500" r="1.500" fill="#53575f"/><circle cx="11.500" cy="1.500" r="1.500" fill="#53575f"/></svg>
                </div>
            </div>

            <!-- Gantt -->
            <div class="gantt">
                <div class="gantt-side">
                    <svg viewBox="0 0 15 15"><path d="M0 4h9M0 8h14M0 12h8M10 4l4 4-4 4" fill="none" stroke="#c3c7cf" stroke-width="1.500"/></svg>
                </div>
                <div class="timeline">
                    <div class="months">
                        <div class="month month-may"></div>
                        <div class="month month-june">June, 2022</div>
                    </div>
                    <div class="days">
                        <div class="day day-first">26</div>
                        <div class="day">27</div>
                        <div class="day day-off">28</div>
                        <div class="day day-off">29</div>
                        <div class="day">30</div>
                        <div class="day">31</div>
                        <div class="day">01</div>
                        <div class="day">02</div>
                        <div class="day">03</div>
                        <div class="day day-off">04</div>
                        <div class="day day-off">05</div>
                        <div class="day">06</div>
                        <div class="day">07</div>
                        <div class="day">08</div>
                        <div class="day">09</div>
                        <div class="day">10</div>
                        <div class="day day-off">11</div>
                        <div class="day day-off">12</div>
                        <div class="day">13</div>
                        <div class="day">14</div>
                        <div class="day">15</div>
                        <div class="day">16</div>
                        <div class="day">17</div>
                        <div class="day day-off">18</div>
                    </div>
                    <div class="chart">
                        <div class="summary"></div>
                        <svg class="links" width="1886" height="300">
                            <defs>
                                <g id="dep">
                                    <path d="M0 0h12v17H-12v18h7" fill="none" stroke="#b9bfca" stroke-width="2"/>
                                    <path d="M-6 30L0 35l-6 5z" fill="#b9bfca"/>
                                </g>
                            </defs>
                            <use href="#dep" x="49" y="122"/>
                            <use href="#dep" x="449" y="157"/>
                            <use href="#dep" x="689" y="192"/>
                            <use href="#dep" x="929" y="227"/>
                        </svg>
                        <div class="task task-a"></div>
                        <div class="task task-b">Primary and Initial design (T5)</div>
                        <div class="task task-c">Design system interfaces (T6)</div>
                        <div class="task task-d"></div>
                        <div class="task-label">Design completeness and verification(T7)</div>
                        <div class="task task-e">Implementation &amp; coding (T8)</div>
                    </div>
                </div>
                <div class="add-task"><svg viewBox="0 0 10 10"><path d="M5 0v10M0 5h10" stroke="#fff" stroke-width="1.600"/></svg>Task</div>
                <div class="apps-btn"><svg viewBox="0 0 12 12"><circle cx="3" cy="3" r="2" fill="none" stroke="#f27fae" stroke-width="1.800"/><circle cx="9.500" cy="3" r="2" fill="none" stroke="#f2a84a" stroke-width="1.800"/><circle cx="3" cy="9.500" r="2" fill="none" stroke="#4dbb8a" stroke-width="1.800"/><circle cx="9.500" cy="9.500" r="2" fill="none" stroke="#6aa5ee" stroke-width="1.800"/></svg></div>
            </div>

            <div class="hscroll">
                <i class="arrow arrow-left"></i>
                <div class="thumb"></div>
                <i class="arrow arrow-right"></i>
            </div>
        </div>
    </div>
</body>
</html>
```

FILE: styles.css
```css
/* Global */
* {
    box-sizing: border-box;
}
html, body {
    height: 100%;
}
body {
    margin: 0;
    display: flex;
    flex-direction: column;
    overflow: hidden;
    font-family: 'Roboto', sans-serif;
    background: linear-gradient(#b25a84 0 460px, #0c5468 460px);
}
.sprite {
    display: none;
}

/* dwm bar */
.statusbar {
    height: 34px;
    flex: none;
    display: flex;
    background-color: #222;
    border-bottom: 1px solid #4d6a85;
    color: #bbb;
    font-family: 'DejaVu Sans Mono', monospace;
    font-size: 21.6px;
    line-height: 35px;
    white-space: pre;
}
.tag {
    width: 44px;
    text-align: center;
    position: relative;
}
.tag-active {
    background-color: #005577;
    color: #eee;
}
.mark {
    position: absolute;
    left: 4px;
    top: 3px;
    width: 6px;
    height: 6px;
    border: 1px solid #bbb;
}
.mark-on {
    background-color: #eee;
    border-color: #eee;
}
.layout {
    width: 70px;
    text-align: center;
}
.wintitle {
    width: 419px;
    padding-left: 15px;
    background-color: #005577;
    color: #eee;
}
.status {
    margin-left: 12px;
}
.gl {
    width: 13px;
    height: 16px;
    vertical-align: -2px;
}
.gl-cal {
    margin-right: -5px;
}
.barlogo {
    width: 31px;
    height: 33px;
    margin-left: 19px;
}

/* Browser window */
.window {
    flex: 1;
    min-height: 0;
    margin: 0 2px 1px 1px;
    display: flex;
    flex-direction: column;
}
.tabstrip {
    height: 34px;
    flex: none;
    display: flex;
    align-items: center;
    padding-left: 8px;
    background-color: #000;
}
.ctab {
    width: 45px;
    height: 22px;
    flex: none;
    display: flex;
    align-items: center;
    padding-left: 8px;
    border-right: 1px solid #3d3d3d;
}
.ctab-sm {
    width: 44px;
}
.ctab-last {
    border-right: none;
}
.fav {
    width: 16px;
    height: 16px;
    flex: none;
}
.ctab span {
    width: 10px;
    margin-left: 8px;
    font-family: 'Noto Sans', sans-serif;
    font-size: 13px;
    color: #d4d4d4;
    white-space: nowrap;
    -webkit-mask-image: linear-gradient(to right, #000 45%, transparent 85%);
    mask-image: linear-gradient(to right, #000 45%, transparent 85%);
}
.ctab-active {
    width: 45px;
    height: 34px;
    flex: none;
    display: flex;
    align-items: center;
    padding-left: 8px;
    background-color: #2d2d2d;
    border-radius: 8px 8px 0 0;
    font-family: 'Noto Sans', sans-serif;
    font-size: 13px;
    color: #bdbdbd;
}
.ctab-close {
    width: 9px;
    height: 9px;
    margin-left: 10px;
    stroke: #e0e0e0;
    stroke-width: 1.500;
}
.newtab {
    width: 12px;
    height: 12px;
    margin-left: 16px;
    stroke: #fff;
    stroke-width: 2;
}
.tabmenu {
    width: 10px;
    height: 6px;
    margin-left: 67px;
    fill: none;
    stroke: #d0d0d0;
    stroke-width: 1.300;
}

.toolbar {
    height: 35px;
    flex: none;
    display: flex;
    align-items: center;
    padding: 4px 5px 0 6px;
    background-color: #2d2d2d;
    color: #d8d8d8;
}
.tbtn {
    width: 32px;
    height: 32px;
    flex: none;
    display: flex;
    align-items: center;
    justify-content: center;
    position: relative;
}
.tbtn svg {
    width: 16px;
    height: 16px;
}
.tbtn-off {
    color: #777;
}
.st {
    fill: none;
    stroke: currentColor;
    stroke-width: 1.800;
}
.st.thin {
    stroke-width: 1.200;
}
.avatar-btn svg {
    width: 22px;
    height: 22px;
}
.omnibox {
    flex: 1;
    height: 31px;
    margin: 0 7px 0 6px;
    display: flex;
    align-items: center;
    padding: 0 1px 0 13px;
    background-color: #3e3e3e;
    border-radius: 16px;
    color: #aaa;
}
.lock {
    width: 9px;
    height: 11px;
}
.url {
    flex: 1;
    margin-left: 12px;
    font-family: 'Noto Sans', sans-serif;
    font-size: 14.15px;
    color: #9aa0a6;
}
.host {
    color: #e8eaed;
}
.xbadge {
    position: absolute;
    font-family: 'Roboto', sans-serif;
    font-size: 10px;
    line-height: 12px;
    padding: 0 2px;
    border-radius: 2px;
    color: #eee;
}
.xbadge-grey {
    left: 15px;
    top: 18px;
    background-color: #555;
}
.xbadge-blue {
    left: 9px;
    top: 18px;
    background-color: #3b78e7;
}

.bookmarks {
    height: 37px;
    flex: none;
    display: flex;
    align-items: center;
    padding: 0 0 2px 15px;
    background-color: #2d2d2d;
    font-family: 'Noto Sans', sans-serif;
    font-size: 12.9px;
    color: #e0e0e0;
}
.gmail {
    width: 14px;
    height: 12px;
    margin-right: 18px;
}
.bm {
    display: flex;
    align-items: center;
    margin-right: 16.8px;
    white-space: nowrap;
}
.folder {
    width: 14px;
    height: 12px;
    margin-right: 9px;
}
.bm-more {
    margin-left: auto;
    margin-right: 19px;
    font-size: 16px;
    color: #ccc;
}

/* ClickUp page */
.page {
    flex: 1;
    min-height: 0;
    display: flex;
    flex-direction: column;
    background-color: #fff;
}
.view-header {
    height: 51px;
    flex: none;
    display: flex;
    align-items: center;
    padding-left: 17px;
    border-bottom: 1px solid #e9ebf0;
}
.burger {
    width: 17px;
    height: 12px;
    margin-right: 19px;
}
.space-btn {
    width: 32px;
    height: 32px;
    display: flex;
    align-items: center;
    justify-content: center;
    background-color: #eceeef;
    border-radius: 6px;
}
.space-btn svg {
    width: 16px;
    height: 16px;
}
.list-name {
    width: 62px;
    padding-left: 8px;
    font-size: 14.500px;
    color: #3f434b;
}
.caret {
    display: inline-block;
    margin-left: 3px;
    vertical-align: 2px;
    border: 3px solid transparent;
    border-top: 4px solid #9a9fa8;
    border-bottom: none;
}
.view-tabs {
    display: flex;
    align-items: center;
    border-left: 1px solid #e9ebf0;
}
.view-tab {
    height: 20px;
    display: flex;
    align-items: center;
    gap: 8px;
    padding-left: 11px;
    border-right: 1px solid #e9ebf0;
    font-size: 13px;
    color: #3f434b;
    position: relative;
    white-space: nowrap;
}
.vt-list { width: 99px; }
.vt-board { width: 80px; }
.vt-box { width: 68px; }
.vt-cal { width: 97px; }
.vt-video { width: 123px; gap: 5px; }
.vt-gantt { width: 78px; }
.vt-chat { width: 72px; }
.vt-doc { width: 69px; }
.vt-white { width: 120px; }
.view-tab svg {
    width: 13px;
    height: 14px;
    flex: none;
}
.view-tab .yt {
    width: 16px;
    height: 16px;
}
.ic {
    fill: none;
    stroke: #b5b9c2;
    stroke-width: 1.200;
}
.view-tab-on {
    color: #7b68ee;
}
.view-tab-on .ic {
    stroke: #7b68ee;
}
.view-tab-on::after {
    content: "";
    position: absolute;
    left: 12px;
    width: 52px;
    bottom: -15px;
    height: 3px;
    background-color: #7b68ee;
    border-radius: 2px 2px 0 0;
}
.view-add {
    display: flex;
    align-items: center;
    gap: 7px;
    padding-left: 16px;
    font-size: 13px;
    color: #6d727c;
}
.view-add svg {
    width: 10px;
    height: 10px;
}
.head-right {
    margin-left: auto;
    display: flex;
    gap: 10px;
    padding-right: 17px;
}
.automate, .share-btn {
    height: 32px;
    display: flex;
    align-items: center;
    border: 1px solid #eceef1;
    border-radius: 8px;
    color: #3f434b;
}
.automate {
    width: 121px;
    padding-left: 8px;
    font-size: 12px;
}
.automate svg:first-child {
    width: 16px;
    height: 16px;
    margin-right: 6px;
}
.auto-sep {
    width: 1px;
    height: 16px;
    margin: 0 9px 0 8px;
    background-color: #e9ebf0;
}
.auto-chev {
    width: 10px;
    height: 6px;
}
.share-btn {
    width: 64px;
    padding-left: 8px;
    gap: 5px;
    font-size: 12.500px;
    color: #6d727c;
}
.share-btn svg {
    width: 11px;
    height: 12px;
}

.banner {
    height: 30px;
    flex: none;
    display: flex;
    align-items: center;
    justify-content: center;
    gap: 9px;
    background-color: #e4dffb;
    font-size: 11px;
    color: #3f434b;
}
.banner svg {
    width: 12px;
    height: 12px;
}
.banner a {
    color: #7b68ee;
    text-decoration: none;
}

.gantt-bar {
    height: 36px;
    flex: none;
    display: flex;
    align-items: center;
    padding-left: 19px;
    border-bottom: 2px solid #e9ebf0;
    font-size: 12px;
    color: #3f434b;
}
.search {
    width: 218px;
    height: 20px;
    display: flex;
    align-items: center;
    border-right: 1px solid #e9ebf0;
    color: #b0b4bb;
}
.search svg:first-child {
    width: 12px;
    height: 12px;
    margin-right: 6px;
}
.search-chev {
    width: 10px;
    height: 6px;
    margin-left: auto;
    margin-right: 12px;
}
.today {
    margin-left: 17px;
}
.scale-pill {
    width: 99px;
    height: 24px;
    margin-left: 9px;
    display: flex;
    align-items: center;
    gap: 6px;
    padding-left: 7px;
    background-color: #f1eefd;
    border-radius: 6px;
    color: #7b68ee;
}
.scale-pill svg {
    width: 12px;
    height: 12px;
}
.tools {
    margin-left: auto;
    display: flex;
    align-items: center;
    padding-right: 20px;
}
.tool {
    display: flex;
    align-items: center;
    gap: 6px;
}
.tool svg {
    width: 10px;
    height: 10px;
}
.tool-dim {
    color: #7c828d;
}
.tool-sort {
    margin-left: 20px;
    gap: 7px;
    font-size: 11.300px;
}
.tool-sort svg {
    width: 8px;
    height: 12px;
}
.tool-me {
    margin-left: 13px;
}
.tool-dot {
    width: 3px;
    height: 3px;
    margin: 0 7px 0 6px;
    border-radius: 50%;
    background-color: #c3c7cf;
}
.tool-assign svg {
    width: 12px;
}
.tool-show {
    margin-left: 20px;
}
.tool-more {
    width: 13px;
    height: 3px;
    margin-left: 16px;
}

/* Gantt */
.gantt {
    flex: 1;
    min-height: 0;
    display: flex;
    position: relative;
}
.gantt-side {
    width: 30px;
    flex: none;
    padding: 10px 0 0 8px;
    border-right: 1px solid #e9ebf0;
}
.gantt-side svg {
    width: 15px;
    height: 15px;
}
.timeline {
    flex: 1;
    min-width: 0;
    display: flex;
    flex-direction: column;
    overflow: hidden;
    background-color: #fafbfd;
}
.months {
    height: 23px;
    flex: none;
    display: flex;
    border-bottom: 1px solid #e9ebf0;
}
.month-may {
    width: 449px;
    border-right: 1px solid #e9ebf0;
}
.month-june {
    padding-left: 1173px;
    font-size: 11px;
    line-height: 22px;
    color: #3f434b;
    white-space: nowrap;
}
.days {
    height: 22px;
    flex: none;
    display: flex;
    border-bottom: 1px solid #e9ebf0;
}
.day {
    width: 80px;
    flex: none;
    border-right: 1px solid #e9ebf0;
    font-size: 12px;
    line-height: 20px;
    text-align: center;
    color: #8a8f99;
}
.day-first {
    width: 49px;
    padding-left: 2px;
    text-align: left;
}
.day-off {
    background-color: #f1f2f5;
}
.chart {
    flex: 1;
    position: relative;
    background-image: repeating-linear-gradient(to right, #e9ebf0 0 1px, transparent 1px 80px);
    background-position: 48px 0;
}
.summary {
    position: absolute;
    left: 0;
    right: 0;
    top: 14px;
    height: 8px;
    background-color: #a8de96;
}
.links {
    position: absolute;
    left: 0;
    top: 0;
}
.task {
    position: absolute;
    height: 25px;
    padding-left: 10px;
    background-color: #d3d3d3;
    border-radius: 9px;
    font-size: 12px;
    line-height: 27px;
    color: #fafafa;
    white-space: nowrap;
}
.task-a {
    left: 0;
    top: 110px;
    width: 49px;
    border-radius: 0 9px 9px 0;
}
.task-b {
    left: 49px;
    top: 145px;
    width: 400px;
}
.task-c {
    left: 449px;
    top: 180px;
    width: 240px;
}
.task-d {
    left: 689px;
    top: 215px;
    width: 240px;
}
.task-e {
    left: 929px;
    top: 250px;
    right: 0;
    border-radius: 9px 0 0 9px;
}
.task-label {
    position: absolute;
    left: 949px;
    top: 215px;
    font-size: 12px;
    line-height: 27px;
    color: #3f434b;
    white-space: nowrap;
}
.add-task {
    position: absolute;
    right: 54px;
    bottom: -3px;
    width: 59px;
    height: 32px;
    display: flex;
    align-items: center;
    gap: 7px;
    padding-left: 8px;
    background-color: #7b68ee;
    border-radius: 10px;
    box-shadow: 0 2px 6px rgba(123, 104, 238, 0.4);
    font-size: 13px;
    color: #fff;
}
.add-task svg {
    width: 10px;
    height: 10px;
}
.apps-btn {
    position: absolute;
    right: 15px;
    bottom: -2px;
    width: 30px;
    height: 30px;
    display: flex;
    align-items: center;
    justify-content: center;
    background-color: #fff;
    border-radius: 10px;
    box-shadow: 0 1px 4px rgba(0, 0, 0, 0.12);
}
.apps-btn svg {
    width: 12px;
    height: 12px;
}

.hscroll {
    height: 17px;
    flex: none;
    display: flex;
    align-items: center;
    justify-content: space-between;
    padding: 0 5px;
    background-color: #f1f1f1;
    border-top: 1px solid #e8e8e8;
}
.thumb {
    position: absolute;
    left: 710px;
    width: 549px;
    height: 11px;
    background-color: #c1c1c1;
}
.arrow {
    border: 4px solid transparent;
}
.arrow-left {
    border-right: 5px solid #505050;
    border-left: none;
}
.arrow-right {
    border-left: 5px solid #505050;
    border-right: none;
}
```
